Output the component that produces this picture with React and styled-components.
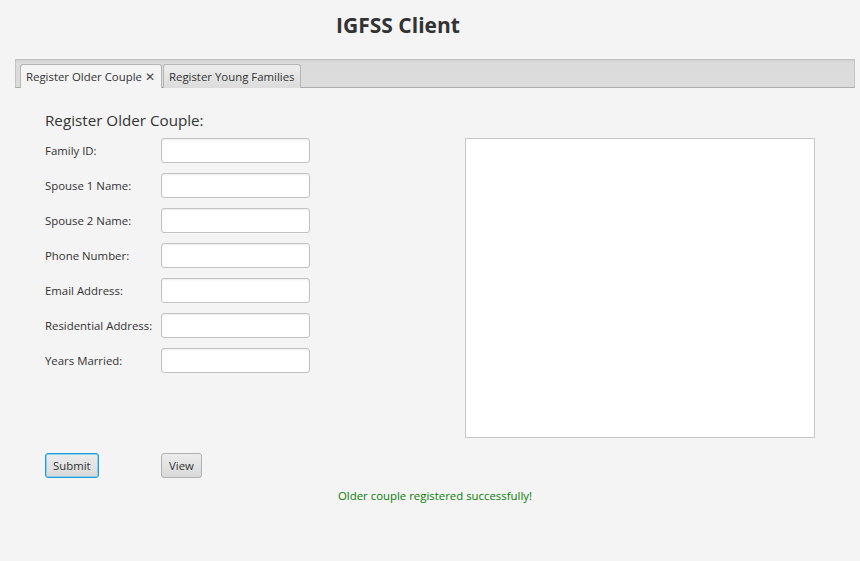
import { createGlobalStyle } from 'styled-components';
import styled from 'styled-components';

const GlobalStyle = createGlobalStyle`
  html, body {
    margin: 0;
    padding: 0;
    background: #f4f4f4;
  }
  body {
    font-family: 'Open Sans', 'Noto Sans', sans-serif;
    color: #333333;
  }
`;

const fields = [
  'Family ID:',
  'Spouse 1 Name:',
  'Spouse 2 Name:',
  'Phone Number:',
  'Email Address:',
  'Residential Address:',
  'Years Married:',
];

const App = () => {
  return (
    <>
      <GlobalStyle />
      <Page>
        <Title>IGFSS Client</Title>
        <TabPane>
          <TabHeader>
            <Tab selected>
              Register Older Couple
              <Close>✕</Close>
            </Tab>
            <Tab>Register Young Families</Tab>
          </TabHeader>
          <Content>
            <FormColumn>
              <Heading>Register Older Couple:</Heading>
              {fields.map((label) => (
                <Row key={label}>
                  <Label>{label}</Label>
                  <Input />
                </Row>
              ))}
            </FormColumn>
            <Output />
          </Content>
          <Buttons>
            <ButtonSlot>
              <Button focused>Submit</Button>
            </ButtonSlot>
            <ButtonSlot>
              <Button>View</Button>
            </ButtonSlot>
          </Buttons>
          <Message>Older couple registered successfully!</Message>
        </TabPane>
      </Page>
    </>
  );
};

const Page = styled.div`
  width: 860px;
  height: 561px;
  overflow: hidden;
`;

const Title = styled.h1`
  margin: 0;
  padding: 11px 0 0 0;
  height: 47px;
  box-sizing: border-box;
  width: 796px;
  text-align: center;
  font-family: 'Open Sans', sans-serif;
  font-size: 21px;
  font-weight: 700;
  color: #333333;
  line-height: 28px;
`;

const TabPane = styled.div`
  margin: 12px 5px 0 15px;
`;

const TabHeader = styled.div`
  display: flex;
  align-items: flex-end;
  gap: 1px;
  height: 29px;
  box-sizing: border-box;
  padding: 0 0 0 4px;
  background: linear-gradient(#d2d2d2 0, #dbdbdb 3px, #dcdcdc 100%);
  border: 1px solid #c4c4c4;
  border-top-color: #c0c0c0;
  border-bottom-color: #acacac;
`;

const Tab = styled.div`
  display: flex;
  align-items: center;
  gap: 3px;
  height: 24px;
  box-sizing: border-box;
  margin-bottom: -1px;
  padding: 0 6px 0 5px;
  font-size: 11.4px;
  color: #333333;
  border: 1px solid #b5b5b5;
  border-bottom: none;
  border-radius: 3px 3px 0 0;
  background: ${(props) =>
    props.selected ? '#f4f4f4' : 'linear-gradient(#ededed, #dcdcdc)'};
`;

const Close = styled.span`
  font-size: 12px;
  color: #444444;
`;

const Content = styled.div`
  display: flex;
  padding: 22px 0 0 30px;
`;

const FormColumn = styled.div`
  width: 420px;
  display: flex;
  flex-direction: column;
`;

const Heading = styled.div`
  font-size: 15.2px;
  height: 20px;
  line-height: 20px;
  margin-bottom: 8px;
  color: #333333;
`;

const Row = styled.div`
  display: flex;
  align-items: center;
  height: 25px;
  margin-bottom: 10px;
`;

const Label = styled.div`
  width: 116px;
  font-size: 11.4px;
  color: #333333;
`;

const Input = styled.div`
  width: 149px;
  height: 25px;
  box-sizing: border-box;
  background: #ffffff;
  border: 1px solid #c2c2c2;
  border-radius: 3px;
  box-shadow: inset 0 1px 2px rgba(0, 0, 0, 0.08);
`;

const Output = styled.div`
  width: 350px;
  height: 300px;
  box-sizing: border-box;
  margin-top: 28px;
  background: #ffffff;
  border: 1px solid #c6c6c6;
`;

const Buttons = styled.div`
  display: flex;
  padding: 15px 0 0 30px;
`;

const ButtonSlot = styled.div`
  width: 116px;
  display: flex;
`;

const Button = styled.div`
  height: 25px;
  box-sizing: border-box;
  padding: 0 7px;
  display: flex;
  align-items: center;
  font-size: 11.4px;
  color: #333333;
  border-radius: 3px;
  background: linear-gradient(#ececec, #d9d9d9);
  border: 1px solid ${(props) => (props.focused ? '#1e9bd6' : '#b0b0b0')};
  box-shadow: ${(props) =>
    props.focused ? 'inset 0 0 0 1px #8fd0ee' : 'none'};
`;

const Message = styled.div`
  margin-top: 10px;
  width: 840px;
  text-align: center;
  font-size: 11.4px;
  color: #0a7d0a;
`;

export default App;
